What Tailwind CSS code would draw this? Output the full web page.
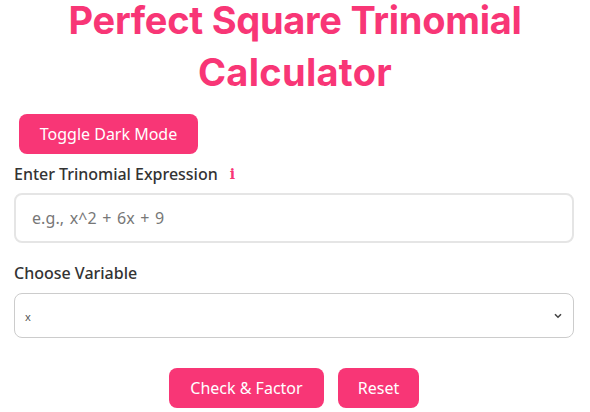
<!DOCTYPE html>
<html><head><meta charset="utf-8"><script src="https://cdn.jsdelivr.net/npm/@tailwindcss/browser@4"></script></head>
<body class="bg-white overflow-hidden font-['Noto_Sans',sans-serif]">
<div class="w-[590px] h-[412px] overflow-hidden px-[14px] flex flex-col">
  <h1 class="flex flex-col gap-[12px] items-center text-[#f83676] text-[38px] leading-[40px] font-bold font-['Inter',sans-serif]">
    <span class="tracking-[-0.28px]">Perfect Square Trinomial</span>
    <span class="tracking-[0.3px]">Calculator</span>
  </h1>
  <div class="pl-[5px] mt-[22px]"><button class="h-[40px] w-[179px] rounded-[8px] bg-[#f83676] text-white text-[16px] leading-none">Toggle Dark Mode</button></div>
  <div class="mt-[9px] flex items-center h-[22px] text-[16px] font-medium text-[#333]"><span class="-tracking-[0.02px]">Enter Trinomial Expression</span><span class="ml-[12px] text-[#f83676] font-bold font-['DejaVu_Serif',serif] text-[14px]">i</span></div>
  <input class="mt-[8px] h-[50px] w-[560px] shrink-0 rounded-[8px] border-2 border-[#e5e5e5] bg-white pl-[16px] pr-[15px] text-[16px] [word-spacing:1.2px] tracking-[0.1px] placeholder:text-[#777] outline-none" placeholder="e.g., x^2 + 6x + 9">
  <div class="mt-[19px] h-[22px] flex items-center text-[16px] font-medium text-[#333]"><span>Choose Variable</span></div>
  <div class="mt-[9px] h-[45px] w-[560px] shrink-0 rounded-[8px] border border-[#ccc] bg-white flex items-center justify-between pl-[10px] pr-[11px]">
    <span class="text-[11px] text-[#555] leading-none mt-[2px]">x</span>
    <svg width="8" height="6" viewBox="0 0 8 6" fill="none" stroke="#444" stroke-width="1.6"><path d="M1 1.2 4 4.2 7 1.2"/></svg>
  </div>
  <div class="mt-[30px] pr-[2px] flex justify-center gap-[14px]">
    <button class="h-[40px] w-[155px] rounded-[8px] bg-[#f83676] text-white text-[16px] leading-none">Check &amp; Factor</button>
    <button class="h-[40px] w-[81px] rounded-[8px] bg-[#f83676] text-white text-[16px] leading-none">Reset</button>
  </div>
</div>
</body></html>
